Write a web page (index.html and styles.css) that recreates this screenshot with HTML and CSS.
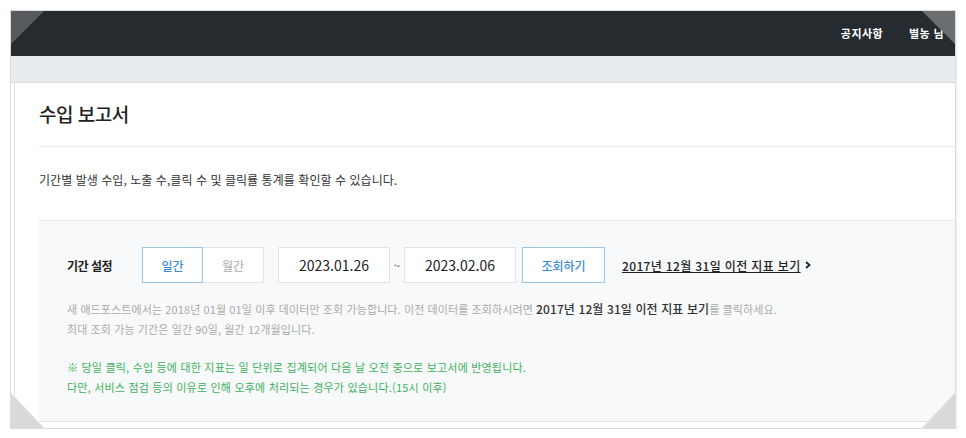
FILE: index.html
```html
<!DOCTYPE html>
<html lang="ko">
<head>
  <meta charset="UTF-8" />
  <title>수입 보고서</title>
  <link rel="stylesheet" href="styles.css">
</head>
<body>
  <div class="frame">
    <!-- 상단 바 -->
    <div class="topbar">
      <a class="top-link">공지사항</a>
      <a class="top-link">별농 님</a>
    </div>
    <div class="subbar"></div>

    <!-- 본문 -->
    <div class="content">
      <h1 class="page-title">수입 보고서</h1>
      <p class="page-desc">기간별 발생 수입, 노출 수,클릭 수 및 클릭률 통계를 확인할 수 있습니다.</p>

      <div class="search-panel">
        <div class="search-row">
          <span class="search-label">기간 설정</span>
          <div class="tabs">
            <button class="tab active">일간</button>
            <button class="tab">월간</button>
          </div>
          <input class="date-input" type="text" value="2023.01.26">
          <span class="tilde">~</span>
          <input class="date-input" type="text" value="2023.02.06">
          <button class="search-btn">조회하기</button>
          <a class="old-link">2017년 12월 31일 이전 지표 보기</a>
          <svg class="arrow" viewBox="0 0 6 8" width="6" height="8">
            <path d="M1 1 L4.5 4 L1 7" stroke="#222" stroke-width="1.8" fill="none"/>
          </svg>
        </div>

        <div class="notes">
          <p>새 애드포스트에서는 2018년 01월 01일 이후 데이터만 조회 가능합니다. 이전 데이터를 조회하시려면 <b>2017년 12월 31일 이전 지표 보기</b>를 클릭하세요.</p>
          <p>최대 조회 가능 기간은 일간 90일, 월간 12개월입니다.</p>
        </div>
        <div class="notes green">
          <p>※ 당일 클릭, 수입 등에 대한 지표는 일 단위로 집계되어 다음 날 오전 중으로 보고서에 반영됩니다.</p>
          <p>다만, 서비스 점검 등의 이유로 인해 오후에 처리되는 경우가 있습니다.(15시 이후)</p>
        </div>
      </div>
    </div>

    <!-- 모서리 장식 -->
    <span class="corner tl"></span>
    <span class="corner tr"></span>
    <span class="corner bl"></span>
    <span class="corner br"></span>
  </div>
</body>
</html>
```

FILE: styles.css
```css
body {
  margin: 0;
  background: #fff;
  font-family: "Noto Sans CJK KR", "Noto Sans", sans-serif;
  overflow: hidden;
}

/* ======================
   바깥 프레임
   ====================== */
.frame {
  position: relative;
  margin: 10px 0 0 10px;
  width: 946px;
  height: 419px;
  box-sizing: border-box;
  border: 1px solid #dcdcdc;
  box-shadow: 1px 1px 2px rgba(0,0,0,0.08);
  overflow: hidden;
  display: flex;
  flex-direction: column;
}

.topbar {
  height: 45px;
  background: #262b2f;
  display: flex;
  justify-content: flex-end;
  align-items: center;
  gap: 26px;
  padding: 0 11px 2px 0;
  box-sizing: border-box;
  flex: 0 0 auto;
}
.top-link {
  color: #fff;
  font-size: 11px;
  font-weight: bold;
  letter-spacing: 0.4px;
}

.subbar {
  height: 27px;
  background: #e8ebee;
  border-bottom: 1px solid #dcdfe2;
  box-sizing: border-box;
  flex: 0 0 auto;
}

/* ======================
   본문
   ====================== */
.content {
  flex: 1;
  margin-left: 3px;
  border-left: 1px solid #e2e4e6;
  background: #fff;
  padding: 0 0 0 24px;
  display: flex;
  flex-direction: column;
  min-height: 0;
}
.page-title {
  margin: 0;
  padding: 17px 0 19px 0;
  font-size: 19px;
  font-weight: 500;
  color: #222;
  border-bottom: 1px solid #ebebeb;
  letter-spacing: -0.5px;
}
.page-desc {
  margin: 0;
  padding: 24px 0 32px 0;
  font-size: 12px;
  color: #333;
  letter-spacing: 0.05px;
}

.search-panel {
  flex: 1;
  background: #f8f9fa;
  border-top: 1px solid #ebebeb;
  border-bottom: 1px solid #e4e4e4;
  margin-bottom: 6px;
  padding: 26px 0 0 28px;
}
.search-row {
  display: flex;
  align-items: center;
}
.search-label {
  width: 75px;
  font-size: 12px;
  font-weight: bold;
  color: #222;
  letter-spacing: -0.5px;
}
.tabs {
  display: flex;
  margin-right: 14px;
}
.tab {
  width: 61px;
  height: 36px;
  border: 1px solid #e4e4e4;
  background: #fff;
  color: #aaa;
  font-family: inherit;
  font-size: 12px;
  padding: 0;
}
.tab + .tab {
  border-left: none;
}
.tab.active {
  border-color: #9cc4e4;
  color: #3b8bd4;
  font-weight: 500;
}
.date-input {
  width: 112px;
  height: 36px;
  box-sizing: border-box;
  border: 1px solid #e4e4e4;
  background: #fff;
  text-align: center;
  font-family: inherit;
  font-size: 14px;
  color: #222;
  padding: 0;
}
.tilde {
  width: 14px;
  text-align: center;
  font-size: 11px;
  color: #555;
}
.search-btn {
  margin-left: 6px;
  width: 83px;
  height: 36px;
  border: 1px solid #9cc4e4;
  background: #fff;
  color: #3b8bd4;
  font-family: inherit;
  font-size: 12px;
  font-weight: 500;
  padding: 0;
}
.old-link {
  margin-left: 17px;
  font-size: 12px;
  font-weight: 500;
  color: #222;
  text-decoration: underline;
  letter-spacing: 0.35px;
}
.arrow {
  margin-left: 4px;
}

.notes {
  margin-top: 16px;
}
.notes p {
  margin: 0;
  font-size: 11px;
  line-height: 20px;
  color: #aaa;
  letter-spacing: 0.1px;
}
.notes p b {
  color: #333;
  font-size: 12px;
  font-weight: 500;
}
.notes.green {
  margin-top: 18px;
}
.notes.green p {
  color: #40b15c;
  letter-spacing: 0.2px;
}

/* ======================
   모서리 장식
   ====================== */
.corner {
  position: absolute;
  width: 0;
  height: 0;
}
.corner.tl {
  top: 0;
  left: 0;
  border-top: 33px solid #575b5f;
  border-right: 33px solid transparent;
}
.corner.tr {
  top: 0;
  right: 0;
  border-top: 33px solid #6a6e71;
  border-left: 33px solid transparent;
}
.corner.bl {
  bottom: 0;
  left: 0;
  border-bottom: 35px solid #d9d9d9;
  border-right: 33px solid transparent;
}
.corner.br {
  bottom: 0;
  right: 0;
  border-bottom: 35px solid #d9d9d9;
  border-left: 33px solid transparent;
}
```
